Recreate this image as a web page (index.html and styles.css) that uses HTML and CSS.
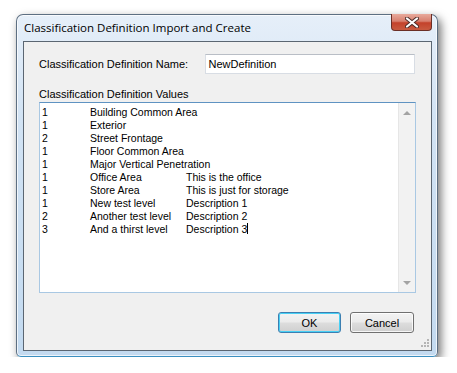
FILE: index.html
```html
<!DOCTYPE html>
<html lang="en">
<head>
    <meta charset="UTF-8">
    <title>Classification Definition Import and Create</title>
    <link rel="stylesheet" href="styles.css">
</head>
<body>
    <div class="window">
        <div class="titlebar">
            <span class="title">Classification Definition Import and Create</span>
            <div class="close-btn">
                <svg width="14" height="11" viewBox="0 0 14 11">
                    <path d="M2 1.5 L12 9.5 M12 1.5 L2 9.5" stroke="#4a2a26" stroke-width="4" stroke-linecap="round"/>
                    <path d="M2 1.5 L12 9.5 M12 1.5 L2 9.5" stroke="#ffffff" stroke-width="2.2" stroke-linecap="round"/>
                </svg>
            </div>
        </div>

        <div class="client">
            <div class="name-row">
                <label class="name-label">Classification Definition Name:</label>
                <div class="textbox">NewDefinition</div>
            </div>

            <div class="values-label">Classification Definition Values</div>
            <div class="values-box">
                <div class="values-list">
                    <div class="row"><span class="c1">1</span><span class="c2">Building Common Area</span></div>
                    <div class="row"><span class="c1">1</span><span class="c2">Exterior</span></div>
                    <div class="row"><span class="c1">2</span><span class="c2">Street Frontage</span></div>
                    <div class="row"><span class="c1">1</span><span class="c2">Floor Common Area</span></div>
                    <div class="row"><span class="c1">1</span><span class="c2">Major Vertical Penetration</span></div>
                    <div class="row"><span class="c1">1</span><span class="c2">Office Area</span><span>This is the office</span></div>
                    <div class="row"><span class="c1">1</span><span class="c2">Store Area</span><span>This is just for storage</span></div>
                    <div class="row"><span class="c1">1</span><span class="c2">New test level</span><span>Description 1</span></div>
                    <div class="row"><span class="c1">2</span><span class="c2">Another test level</span><span>Description 2</span></div>
                    <div class="row"><span class="c1">3</span><span class="c2">And a thirst level</span><span>Description 3<span class="caret"></span></span></div>
                </div>
                <div class="scrollbar">
                    <span class="arrow-up"></span>
                    <span class="arrow-down"></span>
                </div>
            </div>

            <div class="buttons">
                <button class="btn btn-default">OK</button>
                <button class="btn">Cancel</button>
            </div>

            <svg class="grip" width="8" height="8" viewBox="0 0 8 8">
                <rect x="6" y="0" width="2" height="2" fill="#b5b5b5"/>
                <rect x="3" y="3" width="2" height="2" fill="#b5b5b5"/>
                <rect x="6" y="3" width="2" height="2" fill="#b5b5b5"/>
                <rect x="0" y="6" width="2" height="2" fill="#b5b5b5"/>
                <rect x="3" y="6" width="2" height="2" fill="#b5b5b5"/>
                <rect x="6" y="6" width="2" height="2" fill="#b5b5b5"/>
            </svg>
        </div>
    </div>
</body>
</html>
```

FILE: styles.css
```css
body {
    margin: 0;
    background: #ffffff;
    font-family: "Liberation Sans", Arial, sans-serif;
    font-size: 11px;
    color: #000;
}
.window {
    box-sizing: border-box;
    width: 422px;
    height: 343px;
    margin: 14px 0 0 16px;
    padding: 0 5px 5px 6px;
    border: 1px solid #5d6f82;
    border-bottom-color: #3b8fc0;
    border-radius: 7px 7px 5px 5px;
    background: linear-gradient(to bottom, #e6eff9 0%, #d2e3f4 30%, #c3daf0 100%);
    box-shadow: 3px 4px 10px rgba(0, 0, 0, 0.55), inset 0 0 0 1px rgba(255, 255, 255, 0.7);
    display: flex;
    flex-direction: column;
}
.titlebar {
    height: 26px;
    display: flex;
    align-items: flex-start;
    justify-content: space-between;
}
.title {
    padding: 5px 0 0 1px;
    font-family: "Open Sans", sans-serif;
    font-size: 11.5px;
    color: #000;
}
.close-btn {
    width: 41px;
    height: 17px;
    margin-top: -1px;
    box-sizing: border-box;
    border: 1px solid #6b2f26;
    border-top: none;
    border-radius: 0 0 4px 4px;
    background: linear-gradient(to bottom, #e8aa9c 0%, #d8806f 45%, #c4422b 55%, #c85a40 100%);
    display: flex;
    align-items: center;
    justify-content: center;
}
.client {
    position: relative;
    flex: 1;
    box-sizing: border-box;
    background: #f0f0f0;
    border: 1px solid #5b6672;
    padding: 12px 16px 0 15px;
    display: flex;
    flex-direction: column;
}
.name-row {
    display: flex;
    align-items: center;
    height: 20px;
}
.name-label {
    width: 166px;
}
.textbox {
    box-sizing: border-box;
    width: 211px;
    height: 20px;
    border: 1px solid #d8dde4;
    border-top-color: #b9bec6;
    background: #fff;
    padding: 3px 0 0 3px;
}
.values-label {
    margin-top: 14px;
    height: 14px;
}
.values-box {
    box-sizing: border-box;
    width: 377px;
    height: 191px;
    border: 1px solid #a9c8e3;
    border-top-color: #5f93c2;
    background: #fff;
    display: flex;
}
.values-list {
    flex: 1;
    padding: 3px 0 0 2px;
    font-size: 10.5px;
}
.row {
    height: 13px;
    line-height: 13px;
    display: flex;
    white-space: nowrap;
}
.c1 {
    width: 48px;
}
.c2 {
    width: 96px;
}
.caret {
    display: inline-block;
    width: 1px;
    height: 11px;
    background: #000;
    vertical-align: -1px;
}
.scrollbar {
    width: 16px;
    background: #f2f2f2;
    border-left: 1px solid #e6e6e6;
    display: flex;
    flex-direction: column;
    justify-content: space-between;
    align-items: center;
    padding: 8px 0 7px;
}
.arrow-up, .arrow-down {
    width: 0;
    height: 0;
    border-left: 4px solid transparent;
    border-right: 4px solid transparent;
}
.arrow-up {
    border-bottom: 4px solid #a3a3a3;
}
.arrow-down {
    border-top: 4px solid #a3a3a3;
}
.buttons {
    display: flex;
    justify-content: flex-end;
    gap: 9px;
    margin-top: 19px;
    padding-right: 1px;
}
.btn {
    box-sizing: border-box;
    width: 64px;
    height: 21px;
    font-family: "Liberation Sans", Arial, sans-serif;
    font-size: 11px;
    color: #000;
    border: 1px solid #707070;
    border-radius: 3px;
    background: linear-gradient(to bottom, #f3f3f3 0%, #ebebeb 48%, #dddddd 52%, #cfcfcf 100%);
    box-shadow: inset 0 0 0 1px rgba(255, 255, 255, 0.8);
    padding: 0;
}
.btn-default {
    width: 63px;
    border-color: #3c7fb1;
    box-shadow: inset 0 0 0 1px #48d0f5;
}
.grip {
    position: absolute;
    right: 2px;
    bottom: 3px;
}
```
